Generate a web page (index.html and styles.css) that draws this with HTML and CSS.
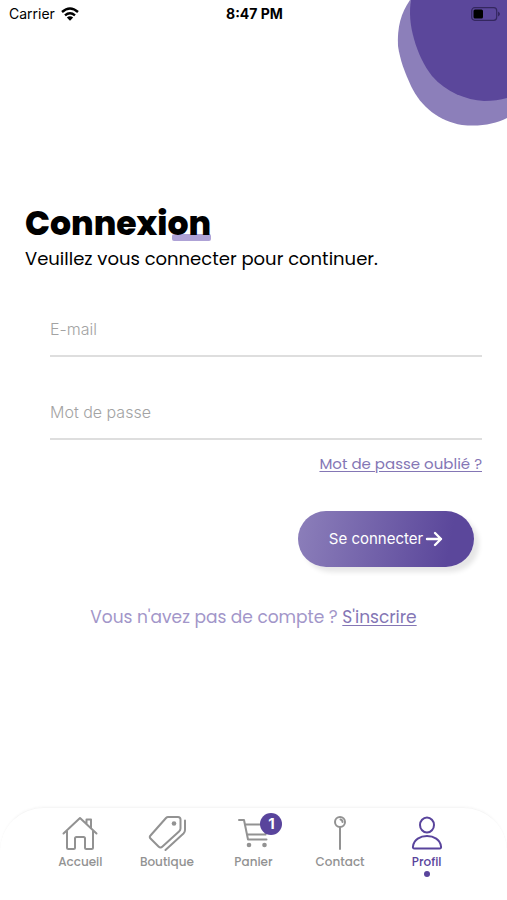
FILE: index.html
```html
<!DOCTYPE html>
<html lang="fr">
<head>
<meta charset="utf-8">
<meta name="viewport" content="width=device-width, initial-scale=1">
<title>Connexion</title>
<link rel="stylesheet" href="styles.css">
</head>
<body>
<svg class="blob" width="110" height="128" viewBox="0 0 110 128" aria-hidden="true">
  <path fill="#8c7fba" d="M13 0C4 13 0 27 1 46C3 60 8 73 14 86C24 107 42 121 65 125C83 127 98 124 110 118V0Z"/>
  <path fill="#5b479b" d="M14 0C12 12 13 25 17 39C21 53 27 66 35 76C49 92 69 100 87 101C96 101 103 100 110 98V0Z"/>
</svg>
<header class="status">
  <div class="carrier">
    <span>Carrier</span>
    <svg width="18" height="14" viewBox="0 0 18 14" aria-hidden="true">
      <g fill="none" stroke="#000" stroke-width="2.4"><path d="M1 5Q9-2 17 5"/><path d="M4 8.300Q9 4 14 8.300"/></g>
      <path d="M5.800 10.500Q9 8 12.200 10.500L9 13.700Z"/>
    </svg>
  </div>
  <time class="clock">8:47 PM</time>
  <svg class="battery" width="29" height="14" viewBox="0 0 29 14" aria-hidden="true">
    <rect x=".7" y=".7" width="25" height="12.600" rx="3" fill="none" stroke="#34275f" stroke-width="1.200"/>
    <rect x="2.500" y="2.500" width="9.500" height="9" rx="1.500"/>
    <path fill="#34275f" d="M27 4.500Q31 7 27 9.500Z"/>
  </svg>
</header>
<main class="main">
  <h1 class="title">Connexion</h1>
  <p class="subtitle">Veuillez vous connecter pour continuer.</p>
  <form class="form">
    <input class="field" type="email" placeholder="E-mail" aria-label="E-mail">
    <input class="field" type="password" placeholder="Mot de passe" aria-label="Mot de passe">
    <a class="forgot" href="#">Mot de passe oublié ?</a>
    <button class="submit" type="submit">Se connecter
      <svg width="18" height="16" viewBox="0 0 18 16" fill="none" stroke="#fff" stroke-width="2.400" stroke-linecap="round" stroke-linejoin="round" aria-hidden="true"><path d="M2 8H16M10 2L16 8L10 14"/></svg>
    </button>
  </form>
  <p class="signup">Vous n'avez pas de compte ? <a href="#">S'inscrire</a></p>
</main>
<nav class="tabs">
  <a class="tab" href="#">
    <svg width="36" height="36" viewBox="0 0 36 36" aria-hidden="true"><path d="M1.500 18.500L18 3L34.500 18.500M5 16V32.500Q5 34 6.500 34H11.500Q13 34 13 32.500V23.500Q13 22 14.500 22H21.500Q23 22 23 23.500V32.500Q23 34 24.500 34H29.500Q31 34 31 32.500V16M24.500 8.500V4.500H29V13"/></svg>
    <span>Accueil</span>
  </a>
  <a class="tab" href="#">
    <svg width="38" height="36" viewBox="0 0 38 36" aria-hidden="true"><path d="M20 2H30Q32.500 2 32.500 4.500V13.500Q32.500 15 31 16.500L14.500 31.500Q12.500 33.500 10.500 31.500L2.500 23.500Q1 22 2.500 20.500L18 3Q19 2 20 2ZM37 5.500V15Q37 17 35.500 18.500L17.500 35"/><circle class="solid" cx="26" cy="8.500" r="2.300"/></svg>
    <span>Boutique</span>
  </a>
  <a class="tab" href="#">
    <span class="cart">
      <svg width="32" height="36" viewBox="0 0 32 36" aria-hidden="true"><path d="M2 5H7L11 24.500H29.500M8 9.500H30L28.500 19.500H10"/><circle class="solid" cx="12" cy="30" r="2.300"/><circle class="solid" cx="27.500" cy="30" r="2.300"/></svg>
      <b class="badge">1</b>
    </span>
    <span>Panier</span>
  </a>
  <a class="tab" href="#">
    <svg width="16" height="36" viewBox="0 0 16 36" aria-hidden="true"><circle cx="8" cy="7" r="5"/><path d="M8 12V34M8.500 4.500Q10.500 5 10.500 7"/></svg>
    <span>Contact</span>
  </a>
  <a class="tab active" href="#" aria-current="page">
    <svg width="32" height="36" viewBox="0 0 32 36" aria-hidden="true"><ellipse cx="16" cy="10" rx="7" ry="7.500"/><path d="M3.500 33.500Q1.500 33.500 2 31.500C3.500 17.500 28.500 17.500 30 31.500Q30.500 33.500 28.500 33.500Z"/></svg>
    <span>Profil</span>
  </a>
</nav>
</body>
</html>
```
FILE: styles.css
```css
* {
  box-sizing: border-box;
}

body {
  position: relative;
  display: flex;
  flex-direction: column;
  min-height: 100vh;
  margin: 0;
  overflow-x: hidden;
  background: #fff;
  color: #000;
  font-family: Poppins, Inter, sans-serif;
}

h1,
p {
  margin: 0;
}

.blob {
  position: absolute;
  top: 0;
  right: 0;
  z-index: -1;
}

.status {
  display: grid;
  grid-template-columns: 1fr auto 1fr;
  align-items: center;
  height: 28px;
  padding: 0 7px 0 9px;
  font: 14px/20px Inter, sans-serif;
}

.carrier {
  display: flex;
  align-items: center;
  gap: 6px;
}

.clock {
  font-weight: 700;
}

.battery {
  justify-self: end;
}

.main {
  flex: 1;
  padding: 173px 25px 24px;
}

.title {
  position: relative;
  width: fit-content;
  font-size: 33px;
  line-height: 46px;
  font-weight: 800;
}

.title::before {
  position: absolute;
  right: 0;
  bottom: 6px;
  z-index: -1;
  width: 39px;
  height: 7px;
  border-radius: 2px;
  background: #aea2d6;
  content: "";
}

.subtitle {
  font-size: 18px;
  line-height: 24px;
}

.form {
  display: flex;
  flex-direction: column;
  padding-left: 25px;
}

.field {
  width: 100%;
  height: 54px;
  margin-top: 29px;
  padding: 0;
  border: 0;
  border-bottom: 2px solid #dedede;
  outline: 0;
  background: none;
  color: #333;
  font: 300 16px/24px Inter, sans-serif;
}

.field:first-child {
  margin-top: 32px;
}

.field::placeholder {
  color: #a3a3a3;
}

.forgot {
  align-self: flex-end;
  margin-top: 13px;
  color: #8476b5;
  font-size: 15px;
  line-height: 22px;
  text-underline-offset: 2px;
}

.submit {
  display: flex;
  align-self: flex-end;
  align-items: center;
  justify-content: center;
  gap: 2px;
  width: 176px;
  height: 56px;
  margin: 36px 8px 0 0;
  padding: 0;
  border: 0;
  border-radius: 28px;
  background: linear-gradient(100deg, #8c7fba, #5b479b 85%);
  box-shadow: 5px 5px 5px #e6e6e6;
  color: #fff;
  font: 15px/20px Inter, sans-serif;
}

.signup {
  margin-top: 37px;
  color: #a296c9;
  font-size: 17px;
  line-height: 26px;
  text-align: center;
}

.signup a {
  color: #8476b5;
  text-underline-offset: 2px;
}

.tabs {
  display: grid;
  grid-template-columns: repeat(5, 1fr);
  height: 93px;
  padding: 7px 37px 0;
  border-top: 1px solid #f6f6f6;
  border-radius: 44px 44px 0 0;
  box-shadow: 0 -1px 2px #fafafa;
}

.tab {
  display: flex;
  flex-direction: column;
  align-items: center;
  gap: 2px;
  color: #929292;
  font-size: 12px;
  line-height: 17px;
  font-weight: 500;
  text-decoration: none;
}

.tab svg {
  display: block;
  fill: none;
  stroke: currentColor;
  stroke-width: 2;
  stroke-linecap: round;
  stroke-linejoin: round;
}

.tab .solid {
  fill: currentColor;
  stroke: none;
}

.cart {
  position: relative;
}

.badge {
  position: absolute;
  top: -2px;
  right: -13px;
  width: 22px;
  height: 22px;
  border-radius: 50%;
  background: #59449c;
  color: #fff;
  font: 700 15px/22px Inter, sans-serif;
  text-align: center;
}

.active {
  color: #59449c;
}

.active::after {
  width: 6px;
  height: 6px;
  margin-top: -1px;
  border-radius: 50%;
  background: currentColor;
  content: "";
}
```
